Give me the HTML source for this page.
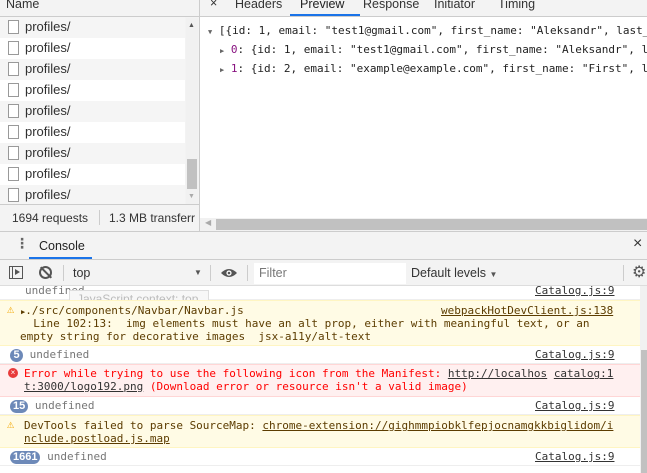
<!DOCTYPE html><html><head><style>
*{box-sizing:border-box;margin:0;padding:0}
body{width:647px;height:473px;overflow:hidden;background:#fff;font-family:"Liberation Sans","DejaVu Sans",sans-serif;font-size:12px;color:#333;position:relative}
.a{position:absolute}
.mono{font-family:"DejaVu Sans Mono","Liberation Mono",monospace;font-size:11px}
.row{position:absolute;left:0;width:185px;height:21px;font-size:13px;color:#303030}
.cb{position:absolute;left:8px;top:3px;width:11px;height:14px;border:1px solid #999;background:#fff}
.row span{position:absolute;left:25px;top:2px}
.u{text-decoration:underline}
.badge{display:inline-block;background:#6d89b8;color:#fff;border-radius:8px;font-family:"Liberation Sans",sans-serif;font-size:11px;padding:0 3px;min-width:13px;text-align:center;line-height:13px;font-weight:bold}
</style></head><body>
<div class="a" style="left:0;top:0;width:199px;height:232px;background:#f3f3f3"></div>
<div class="a" style="left:0;top:0;width:199px;height:17px;border-bottom:1px solid #ccc;background:#f3f3f3"><span class="a" style="left:6px;top:-3px;font-size:12.5px">Name</span></div>
<div class="row" style="top:17px;background:#f5f5f5"><div class="cb"></div><span>profiles/</span></div>
<div class="row" style="top:38px;background:#fff"><div class="cb"></div><span>profiles/</span></div>
<div class="row" style="top:59px;background:#f5f5f5"><div class="cb"></div><span>profiles/</span></div>
<div class="row" style="top:80px;background:#fff"><div class="cb"></div><span>profiles/</span></div>
<div class="row" style="top:101px;background:#f5f5f5"><div class="cb"></div><span>profiles/</span></div>
<div class="row" style="top:122px;background:#fff"><div class="cb"></div><span>profiles/</span></div>
<div class="row" style="top:143px;background:#f5f5f5"><div class="cb"></div><span>profiles/</span></div>
<div class="row" style="top:164px;background:#fff"><div class="cb"></div><span>profiles/</span></div>
<div class="row" style="top:185px;background:#f5f5f5"><div class="cb"></div><span>profiles/</span></div>
<div class="a" style="left:186px;top:18px;width:12px;height:186px;background:#f1f1f1"></div>
<div class="a" style="left:187px;top:159px;width:10px;height:30px;background:#c1c1c1"></div>
<div class="a" style="left:188px;top:22px;font-size:7px;color:#555">▲</div>
<div class="a" style="left:188px;top:193px;font-size:7px;color:#aaa">▼</div>
<div class="a" style="left:0;top:204px;width:199px;height:27px;border-top:1px solid #ccc;background:#f3f3f3;font-size:12px">
<span class="a" style="left:12px;top:6px">1694 requests</span>
<div class="a" style="left:99px;top:5px;width:1px;height:15px;background:#ccc"></div>
<span class="a" style="left:109px;top:6px;white-space:nowrap">1.3 MB transferr</span></div>
<div class="a" style="left:199px;top:0;width:1px;height:232px;background:#ccc"></div>
<div class="a" style="left:200px;top:0;width:447px;height:17px;background:#f3f3f3;border-bottom:1px solid #ccc;font-size:12.5px;white-space:nowrap">
<span class="a" style="left:10px;top:-4px">×</span>
<span class="a" style="left:35px;top:-3px">Headers</span>
<span class="a" style="left:100px;top:-3px;color:#222">Preview</span>
<div class="a" style="left:90px;top:14px;width:70px;height:2px;background:#1a73e8"></div>
<span class="a" style="left:163px;top:-3px">Response</span>
<span class="a" style="left:234px;top:-3px">Initiator</span>
<span class="a" style="left:298px;top:-3px">Timing</span></div>
<div class="a mono" style="left:208px;top:22px;white-space:nowrap;color:#222;line-height:17px">
<div><span style="font-size:7px;color:#666">▼</span> [{id: 1, email: "test1@gmail.com", first_name: "Aleksandr", last_</div>
<div style="padding-left:12px"><span style="font-size:7px;color:#666">▶</span> <span style="color:#881280">0</span>: {id: 1, email: "test1@gmail.com", first_name: "Aleksandr", l</div>
<div style="padding-left:12px"><span style="font-size:7px;color:#666">▶</span> <span style="color:#881280">1</span>: {id: 2, email: "example@example.com", first_name: "First", l</div></div>
<div class="a" style="left:200px;top:218px;width:447px;height:13px;background:#f1f1f1"></div>
<div class="a" style="left:216px;top:219px;width:431px;height:11px;background:#c1c1c1"></div>
<div class="a" style="left:205px;top:218px;font-size:8px;color:#aaa">◀</div>
<div class="a" style="left:0;top:231px;width:647px;height:29px;background:#f3f3f3;border-top:1px solid #ccc;border-bottom:1px solid #ccc">
<span class="a" style="left:15px;top:3px;font-size:14px;font-weight:bold;color:#666">⋮</span>
<span class="a" style="left:39px;top:7px;font-size:12.5px;color:#222">Console</span>
<div class="a" style="left:29px;top:25px;width:63px;height:2px;background:#1a73e8"></div>
<span class="a" style="left:633px;top:3px;font-size:16px;color:#333">×</span></div>
<div class="a" style="left:0;top:260px;width:647px;height:26px;background:#f3f3f3;border-bottom:1px solid #ddd">
<div class="a" style="left:9px;top:6px;width:14px;height:13px;border:1px solid #555"></div>
<div class="a" style="left:12px;top:6px;width:1px;height:13px;background:#555"></div>
<div class="a" style="left:15px;top:9px;width:0;height:0;border-left:5px solid #555;border-top:3.5px solid transparent;border-bottom:3.5px solid transparent"></div>
<div class="a" style="left:39px;top:6px;width:13px;height:13px;border:2px solid #555;border-radius:50%"></div>
<div class="a" style="left:45px;top:5px;width:2px;height:15px;background:#555;transform:rotate(-45deg)"></div>
<div class="a" style="left:63px;top:5px;width:1px;height:16px;background:#ccc"></div>
<span class="a" style="left:73px;top:6px;font-size:12.5px">top</span>
<span class="a" style="left:194px;top:8px;font-size:8px;color:#555">▼</span>
<div class="a" style="left:210px;top:5px;width:1px;height:16px;background:#ccc"></div>
<svg class="a" style="left:220px;top:7px" width="18" height="12"><path d="M1 6Q9-2 17 6Q9 14 1 6Z" fill="#555"/><circle cx="9" cy="6" r="2.6" fill="#fff"/><circle cx="9" cy="6" r="1.3" fill="#555"/></svg>
<div class="a" style="left:247px;top:5px;width:1px;height:16px;background:#ccc"></div>
<div class="a" style="left:254px;top:3px;width:152px;height:21px;background:#fff"></div>
<span class="a" style="left:259px;top:6px;font-size:12.5px;color:#777">Filter</span>
<span class="a" style="left:411px;top:6px;font-size:12.5px">Default levels <span style="font-size:8px;color:#555">▼</span></span>
<div class="a" style="left:623px;top:5px;width:1px;height:16px;background:#ccc"></div>
<span class="a" style="left:632px;top:2px;font-size:16px;color:#555">⚙</span></div>
<div class="a mono" style="left:0;top:286px;width:640px;height:187px;line-height:13px">
<div class="a" style="left:0;top:0;width:640px;height:14px;background:#fff;border-bottom:1px solid #eee"><span class="a" style="left:25px;top:-2px;color:#777">undefined</span><span class="a u" style="left:535px;top:-2px">Catalog.js:9</span></div>
<div class="a" style="left:69px;top:4px;width:140px;height:17px;background:#f7f7f7;border:1px solid #ddd;font-family:'Liberation Sans',sans-serif;font-size:12px;color:#bbb;padding:2px 7px">JavaScript context: top</div>
<div class="a" style="left:0;top:14px;width:640px;height:46px;background:#fffbe5;border-top:1px solid #fff5c2;border-bottom:1px solid #fff5c2;color:#5c3c00">
<span class="a" style="left:7px;top:2px;color:#f2a600;font-size:12px">⚠</span>
<span class="a" style="left:21px;top:3px"><span style="font-size:7px">▶</span>./src/components/Navbar/Navbar.js</span>
<span class="a u" style="left:441px;top:3px">webpackHotDevClient.js:138</span>
<span class="a" style="left:20px;top:16px;white-space:pre">  Line 102:13:  img elements must have an alt prop, either with meaningful text, or an</span>
<span class="a" style="left:20px;top:29px;white-space:pre">empty string for decorative images  jsx-a11y/alt-text</span></div>
<div class="a" style="left:0;top:60px;width:640px;height:18px;border-bottom:1px solid #eee"><span class="a" style="left:10px;top:2px"><span class="badge">5</span> <span style="color:#777">undefined</span></span><span class="a u" style="left:535px;top:2px">Catalog.js:9</span></div>
<div class="a" style="left:0;top:78px;width:640px;height:33px;background:#fff0f0;border-top:1px solid #ffd6d6;border-bottom:1px solid #ffd6d6;color:#f00">
<div class="a" style="left:8px;top:3px;width:10px;height:10px;border-radius:50%;background:#e83a3a;color:#fff;font-size:8px;line-height:10px;text-align:center;font-family:'Liberation Sans'">×</div>
<span class="a" style="left:24px;top:2px;white-space:pre">Error while trying to use the following icon from the Manifest: <span class="u" style="color:#333">http://localhos</span> <span class="u" style="color:#333">catalog:1</span></span>
<span class="a" style="left:24px;top:15px;white-space:pre"><span class="u" style="color:#333">t:3000/logo192.png</span> (Download error or resource isn't a valid image)</span></div>
<div class="a" style="left:0;top:111px;width:640px;height:18px;border-bottom:1px solid #eee"><span class="a" style="left:10px;top:2px"><span class="badge">15</span> <span style="color:#777">undefined</span></span><span class="a u" style="left:535px;top:2px">Catalog.js:9</span></div>
<div class="a" style="left:0;top:129px;width:640px;height:33px;background:#fffbe5;border-top:1px solid #fff5c2;border-bottom:1px solid #fff5c2;color:#5c3c00">
<span class="a" style="left:7px;top:2px;color:#f2a600;font-size:12px">⚠</span>
<span class="a" style="left:24px;top:3px;white-space:pre">DevTools failed to parse SourceMap: <span class="u">chrome-extension://gighmmpiobklfepjocnamgkkbiglidom/i</span></span>
<span class="a u" style="left:24px;top:16px">nclude.postload.js.map</span></div>
<div class="a" style="left:0;top:162px;width:640px;height:18px;border-bottom:1px solid #eee"><span class="a" style="left:10px;top:2px"><span class="badge">1661</span> <span style="color:#777">undefined</span></span><span class="a u" style="left:535px;top:2px">Catalog.js:9</span></div>
</div>
<div class="a" style="left:640px;top:286px;width:7px;height:187px;background:#f1f1f1"></div>
<div class="a" style="left:641px;top:350px;width:6px;height:123px;background:#c1c1c1"></div>
</body></html>
